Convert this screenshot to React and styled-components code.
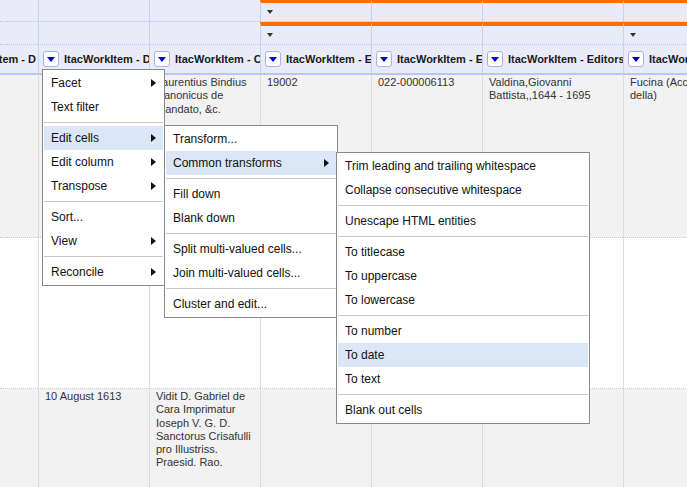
import React from 'react';
import styled, {createGlobalStyle} from 'styled-components';

const GlobalStyle = createGlobalStyle`
    html, body {
        margin: 0;
        padding: 0;
        background: #fff;
        overflow: hidden;
    }
    body {
        font-family: "Liberation Sans", Arial, sans-serif;
    }
`

const COLS = '38px 111px 111px 111px 111px 141px 111px';

const Page = styled.div`
    position: relative;
    width: 687px;
    height: 487px;
    overflow: hidden;
    background: #fff;
`
const Row = styled.div`
    display: grid;
    grid-template-columns: ${COLS};
    height: ${p => p.$height}px;
`
const GroupCell = styled.div`
    box-sizing: border-box;
    background: #e9ecf8;
    border-left: ${p => p.$first ? 'none' : '1px solid #c4d1f5'};
    border-top: ${p => p.$accent ? `${p.$accent}px solid #ff6d00` : 'none'};
    border-bottom: 1px dotted #b3c4f0;
    padding: 6px 0 0 6px;
    overflow: hidden;
`
const Caret = styled.span`
    display: block;
    width: 0;
    height: 0;
    border-left: 3.5px solid transparent;
    border-right: 3.5px solid transparent;
    border-top: 4px solid #333;
`
const HeaderCell = styled.div`
    box-sizing: border-box;
    display: flex;
    align-items: center;
    justify-content: ${p => p.$first ? 'flex-end' : 'flex-start'};
    padding: 0 ${p => p.$first ? '2px' : '0'} 0 4px;
    background: #e9ecf8;
    border-left: ${p => p.$first ? 'none' : '1px solid #c4d1f5'};
    border-bottom: 2px solid #b5c6f3;
    overflow: hidden;
    white-space: nowrap;
`
const DropButton = styled.span`
    box-sizing: border-box;
    flex-shrink: 0;
    display: flex;
    align-items: center;
    justify-content: center;
    width: 16px;
    height: 16px;
    border: 1px solid #a7b2e8;
    border-radius: 3px;
    background: #fff;
    &::after {
        content: "";
        width: 0;
        height: 0;
        border-left: 4.5px solid transparent;
        border-right: 4.5px solid transparent;
        border-top: 5px solid #0000c8;
        margin-top: 1px;
    }
`
const HeaderLabel = styled.span`
    flex-shrink: 0;
    margin-left: 5px;
    font-size: 11px;
    font-weight: bold;
    color: #1a1a1a;
`
const BodyCell = styled.div`
    box-sizing: border-box;
    padding: 1px 6px;
    background: ${p => p.$shade ? '#f2f2f2' : '#fff'};
    border-left: ${p => p.$first ? 'none' : '1px solid #dcdcdc'};
    border-bottom: 1px dotted #c9c9c9;
    font-size: 11px;
    line-height: 13.3px;
    color: #333;
    overflow: hidden;
`
const Menu = styled.div`
    position: absolute;
    left: ${p => p.$left}px;
    top: ${p => p.$top}px;
    width: ${p => p.$width}px;
    box-sizing: border-box;
    padding: 1px;
    background: #fff;
    border: 1px solid #8a8a8a;
`
const MenuItem = styled.div`
    display: flex;
    align-items: center;
    justify-content: space-between;
    height: 24px;
    padding: 0 7px;
    font-size: 12px;
    color: #111;
    white-space: nowrap;
    background: ${p => p.$active ? '#dbe6f6' : 'transparent'};
`
const Arrow = styled.span`
    width: 0;
    height: 0;
    border-top: 4px solid transparent;
    border-bottom: 4px solid transparent;
    border-left: 5px solid #111;
`
const Separator = styled.div`
    height: 1px;
    margin: 3px 0;
    background: #c8c8c8;
`

const columnMenu = [
    {label: 'Facet', sub: true},
    {label: 'Text filter'},
    '-',
    {label: 'Edit cells', sub: true, active: true},
    {label: 'Edit column', sub: true},
    {label: 'Transpose', sub: true},
    '-',
    {label: 'Sort...'},
    {label: 'View', sub: true},
    '-',
    {label: 'Reconcile', sub: true},
]

const editCellsMenu = [
    {label: 'Transform...'},
    {label: 'Common transforms', sub: true, active: true},
    '-',
    {label: 'Fill down'},
    {label: 'Blank down'},
    '-',
    {label: 'Split multi-valued cells...'},
    {label: 'Join multi-valued cells...'},
    '-',
    {label: 'Cluster and edit...'},
]

const transformsMenu = [
    {label: 'Trim leading and trailing whitespace'},
    {label: 'Collapse consecutive whitespace'},
    '-',
    {label: 'Unescape HTML entities'},
    '-',
    {label: 'To titlecase'},
    {label: 'To uppercase'},
    {label: 'To lowercase'},
    '-',
    {label: 'To number'},
    {label: 'To date', active: true},
    {label: 'To text'},
    '-',
    {label: 'Blank out cells'},
]

const headers = [
    'ItacWorkItem - D',
    'ItacWorkItem - D',
    'ItacWorkItem - C',
    'ItacWorkItem - E',
    'ItacWorkItem - E',
    'ItacWorkItem - Editors',
    'ItacWorkItem - Editors',
]

const rows = [
    {height: 163, shade: true, cells: ['', '', 'Laurentius Bindius Canonicus de mandato, &c.', '19002', '022-000006113', 'Valdina,Giovanni Battista,,1644 - 1695', 'Fucina (Accademia della)']},
    {height: 151, shade: false, cells: ['', '', '', '', '', '', '']},
    {height: 140, shade: true, cells: ['', '10 August 1613', 'Vidit D. Gabriel de Cara Imprimatur Ioseph V. G. D. Sanctorus Crisafulli pro Illustriss. Praesid. Rao.', '', '', '', '']},
]

// group header rows: accent = orange bar thickness, carets = columns with a dropdown
const groupRows = [
    {height: 4, accent: 3, carets: []},
    {height: 18, accent: 0, carets: [3]},
    {height: 5, accent: 4, carets: []},
    {height: 18, accent: 0, carets: [3, 6]},
]

const renderMenu = (items, props) => (
    <Menu {...props}>
        {items.map((item, i) => item === '-'
            ? <Separator key={i} />
            : (
                <MenuItem key={i} $active={item.active}>
                    <span>{item.label}</span>
                    {item.sub && <Arrow />}
                </MenuItem>
            ))}
    </Menu>
)

export default function App() {
    return (
        <>
            <GlobalStyle />
            <Page>
                {groupRows.map((g, r) => (
                    <Row key={r} $height={g.height}>
                        {headers.map((_, c) => (
                            <GroupCell key={c} $first={c === 0} $accent={c >= 3 ? g.accent : 0}>
                                {g.carets.includes(c) && <Caret />}
                            </GroupCell>
                        ))}
                    </Row>
                ))}
                <Row $height={30}>
                    {headers.map((h, c) => (
                        <HeaderCell key={c} $first={c === 0}>
                            <DropButton />
                            <HeaderLabel>{h}</HeaderLabel>
                        </HeaderCell>
                    ))}
                </Row>
                {rows.map((row, r) => (
                    <Row key={r} $height={row.height}>
                        {row.cells.map((text, c) => (
                            <BodyCell key={c} $first={c === 0} $shade={row.shade}>{text}</BodyCell>
                        ))}
                    </Row>
                ))}
                {renderMenu(columnMenu, {$left: 42, $top: 69, $width: 123})}
                {renderMenu(editCellsMenu, {$left: 164, $top: 125, $width: 174})}
                {renderMenu(transformsMenu, {$left: 336, $top: 152, $width: 254})}
            </Page>
        </>
    );
}
